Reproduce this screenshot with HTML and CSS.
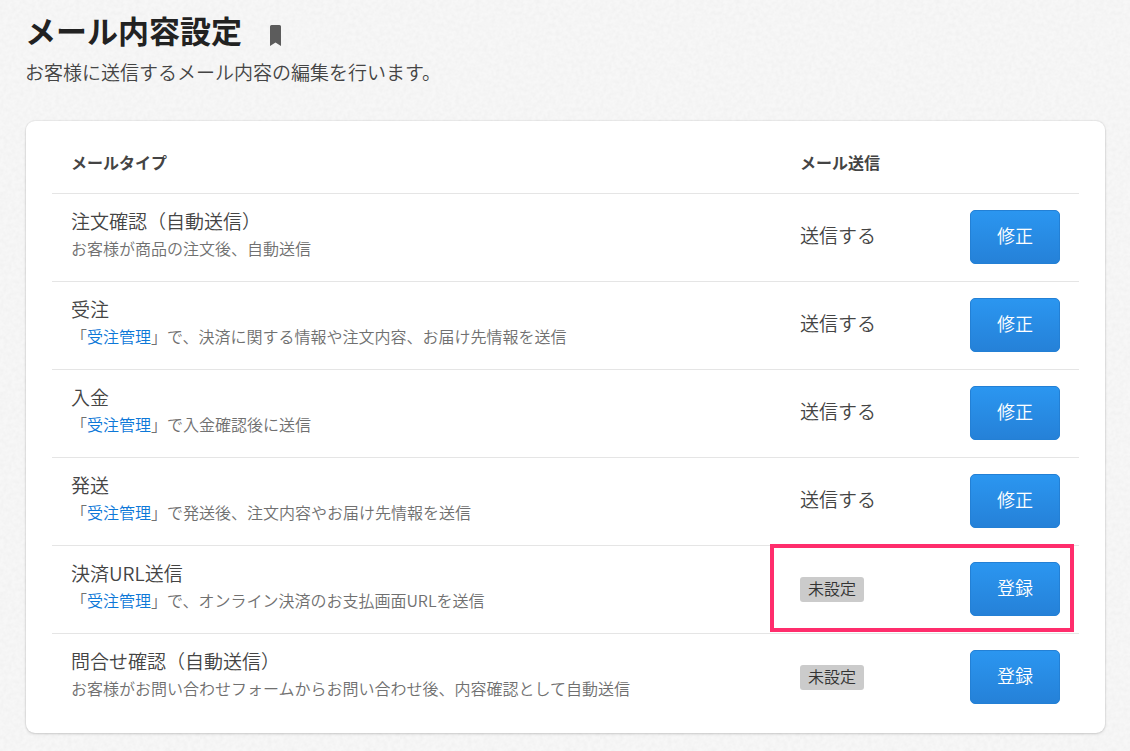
FILE: index.html
```html
<!DOCTYPE html>
<html lang="ja">
<head>
<meta charset="utf-8">
<meta name="viewport" content="width=device-width, initial-scale=1">
<title>メール内容設定</title>
<link rel="stylesheet" href="styles.css">
</head>
<body>
<main class="page">
  <header class="page-header">
    <div class="title-row">
      <h1 class="title">メール内容設定</h1>
      <button class="bookmark" type="button" aria-label="ブックマーク">
        <svg width="12" height="22" viewBox="0 0 12 22" aria-hidden="true"><path d="M1.5 0h8A1.5 1.5 0 0 1 11 1.5V21L5.5 17.5 0 21V1.5A1.5 1.5 0 0 1 1.5 0Z" fill="#5c5c5c"/></svg>
      </button>
    </div>
    <p class="lead">お客様に送信するメール内容の編集を行います。</p>
  </header>
  <section class="card">
    <table class="mail-table">
      <thead>
        <tr><th scope="col">メールタイプ</th><th scope="col" class="col-status">メール送信</th><td class="col-action"></td></tr>
      </thead>
      <tbody>
        <tr>
          <td class="type"><div class="name">注文確認（自動送信）</div><div class="note">お客様が商品の注文後、自動送信</div></td>
          <td class="status">送信する</td>
          <td><button class="btn" type="button">修正</button></td>
        </tr>
        <tr>
          <td class="type"><div class="name">受注</div><div class="note">「<a href="#">受注管理</a>」で、決済に関する情報や注文内容、お届け先情報を送信</div></td>
          <td class="status">送信する</td>
          <td><button class="btn" type="button">修正</button></td>
        </tr>
        <tr>
          <td class="type"><div class="name">入金</div><div class="note">「<a href="#">受注管理</a>」で入金確認後に送信</div></td>
          <td class="status">送信する</td>
          <td><button class="btn" type="button">修正</button></td>
        </tr>
        <tr>
          <td class="type"><div class="name">発送</div><div class="note">「<a href="#">受注管理</a>」で発送後、注文内容やお届け先情報を送信</div></td>
          <td class="status">送信する</td>
          <td><button class="btn" type="button">修正</button></td>
        </tr>
        <tr>
          <td class="type"><div class="name">決済URL送信</div><div class="note">「<a href="#">受注管理</a>」で、オンライン決済のお支払画面URLを送信</div></td>
          <td class="status"><span class="badge">未設定</span></td>
          <td class="marked"><button class="btn" type="button">登録</button><span class="marker"></span></td>
        </tr>
        <tr>
          <td class="type"><div class="name">問合せ確認（自動送信）</div><div class="note">お客様がお問い合わせフォームからお問い合わせ後、内容確認として自動送信</div></td>
          <td class="status"><span class="badge">未設定</span></td>
          <td><button class="btn" type="button">登録</button></td>
        </tr>
      </tbody>
    </table>
  </section>
</main>
</body>
</html>
```
FILE: styles.css
```css
* { box-sizing: border-box; }

body {
  margin: 0;
  color: #444;
  font-family: "Noto Sans CJK JP", sans-serif;
  font-size: 19px;
  font-weight: 350;
  line-height: 28px;
  background-color: #f7f7f7;
  background-image: url("data:image/svg+xml,%3Csvg xmlns='http://www.w3.org/2000/svg' width='200' height='200'%3E%3Cfilter id='n'%3E%3CfeTurbulence type='fractalNoise' baseFrequency='.25' numOctaves='2' stitchTiles='stitch'/%3E%3CfeColorMatrix values='0 0 0 0 0 0 0 0 0 0 0 0 0 0 0 .04 0 0 0 -.012'/%3E%3C/filter%3E%3Crect width='200' height='200' filter='url(%23n)'/%3E%3C/svg%3E");
}

.page { padding: 8px 25px 16px; }
.page-header { margin-bottom: 35px; }

.title-row {
  display: flex;
  align-items: center;
  gap: 28px;
}

.title {
  margin: 0;
  color: #222;
  font-size: 31px;
  font-weight: 700;
  line-height: 44px;
}

.bookmark {
  display: flex;
  padding: 12px 0 0;
  border: 0;
  background: none;
  cursor: pointer;
}

.lead { margin: 6px 0 0; }

.card {
  margin-left: 1px;
  padding: 25px 26px 12px;
  border-radius: 9px;
  background: #fff;
  box-shadow: 0 0 1px 1px rgba(0, 0, 0, .04), 0 1px 3px rgba(0, 0, 0, .16);
}

.mail-table {
  width: 100%;
  border-collapse: collapse;
  table-layout: fixed;
}

.mail-table th,
.mail-table td {
  padding: 0 19px;
  text-align: left;
  vertical-align: middle;
}

.mail-table thead tr { height: 47px; }

.mail-table th {
  padding-bottom: 14px;
  font-size: 16px;
  font-weight: 700;
}

.mail-table .col-status { width: 170px; }
.mail-table .col-action { width: 128px; }

.mail-table tbody tr {
  height: 88px;
  border-top: 1px solid #e5e5e5;
}

.mail-table .type { padding-bottom: 6px; }
.mail-table .status { padding-bottom: 4px; }

.note {
  color: #707070;
  font-size: 16px;
  line-height: 27px;
}

.note a {
  color: #0d78d8;
  text-decoration: none;
}

.btn {
  display: block;
  width: 100%;
  height: 54px;
  padding: 0 0 4px;
  border: 1px solid #2380d5;
  border-radius: 5px;
  background: linear-gradient(#2b96f0, #2581d8);
  color: #fff;
  font: inherit;
  font-size: 18px;
  cursor: pointer;
}

.badge {
  display: inline-block;
  padding: 0 8px 3px;
  border-radius: 3px;
  background: #cbcbcb;
  color: #333;
  font-size: 16px;
  line-height: 22px;
  vertical-align: middle;
}

.mail-table .marked { position: relative; }

.marker {
  position: absolute;
  top: -2px;
  right: 5px;
  bottom: 1px;
  left: -181px;
  border: 4px solid #ff2d6c;
  pointer-events: none;
}
```
